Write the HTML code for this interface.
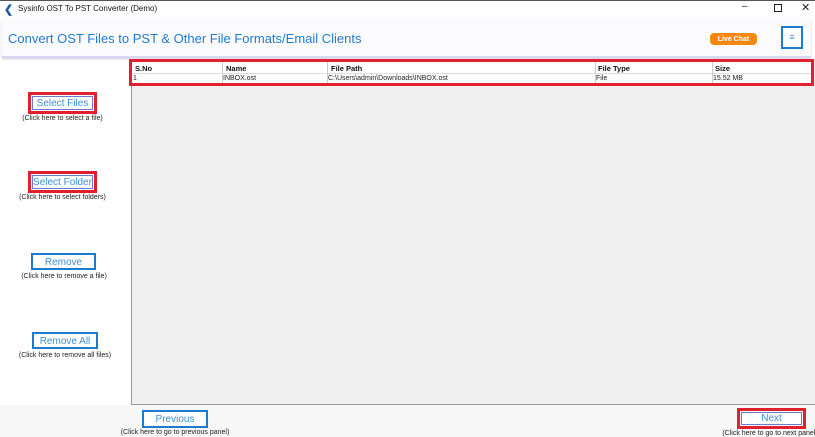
<!DOCTYPE html>
<html><head><style>
*{margin:0;padding:0;box-sizing:border-box}
body{width:815px;height:437px;position:relative;overflow:hidden;background:#fff;font-family:"Liberation Sans",sans-serif}
.a{position:absolute}
.btn{position:absolute;background:#fff;border:2px solid #1a7bd0;color:#3a8fd8;font-size:10px;text-align:center}
.btn.in{border:1px solid #6a7bd0}
.red{position:absolute;border:3px solid #e0202e}
.cap{position:absolute;font-size:7px;color:#222;text-align:center;white-space:nowrap}
.th{position:absolute;top:64px;font-size:7.5px;font-weight:bold;color:#111}
.td{position:absolute;top:75px;font-size:7px;color:#222}
.vl{position:absolute;top:61px;height:22px;width:1px;background:#ccc}
</style></head><body>
<div class="a" style="left:0;top:0;width:815px;height:1px;background:#555"></div>
<div class="a" style="left:4px;top:3px;font-size:11px;color:#1a5c9a;font-weight:bold">&#10094;</div>
<div class="a" style="left:18px;top:4px;font-size:8px;color:#111">Sysinfo OST To PST Converter (Demo)</div>
<div class="a" style="left:742px;top:1px;font-size:10px;color:#222">&#8211;</div>
<div class="a" style="left:774px;top:4px;width:8px;height:8px;border:1px solid #222"></div>
<div class="a" style="left:801px;top:1px;font-size:11px;color:#222">&#10005;</div>
<div class="a" style="left:2px;top:19px;width:809px;height:39px;background:#fbfbfd;border-bottom:2px solid #d8d8f0;box-shadow:0 1px 2px #ccd"></div>
<div class="a" style="left:8px;top:31px;font-size:13px;color:#1f7ad0">Convert OST Files to PST &amp; Other File Formats/Email Clients</div>
<div class="a" style="left:710px;top:33px;width:47px;height:12px;background:#f7880f;border-radius:4px;color:#fff;font-size:7px;font-weight:bold;text-align:center;line-height:13px">Live Chat</div>
<div class="a" style="left:781px;top:26px;width:22px;height:23px;border:2px solid #1a7bd0;background:#fff;color:#4a8fd0;font-size:9px;text-align:center;line-height:19px">&#8801;</div>
<div class="a" style="left:131px;top:59px;width:684px;height:346px;background:#f0f0f0;border-left:1px solid #999;border-bottom:1px solid #999"></div>
<div class="a" style="left:132px;top:61px;width:680px;height:22px;background:#fff"></div>
<div class="a" style="left:132px;top:73px;width:680px;height:1px;background:#ddd"></div>
<div class="vl" style="left:222px"></div><div class="vl" style="left:327px"></div><div class="vl" style="left:595px"></div><div class="vl" style="left:712px"></div>
<div class="th" style="left:135px">S.No</div><div class="th" style="left:226px">Name</div><div class="th" style="left:331px">File Path</div><div class="th" style="left:598px">File Type</div><div class="th" style="left:715px">Size</div>
<div class="td" style="left:133px">1</div><div class="td" style="left:223px">INBOX.ost</div><div class="td" style="left:328px">C:\Users\admin\Downloads\INBOX.ost</div><div class="td" style="left:596px">File</div><div class="td" style="left:713px">15.52 MB</div>
<div class="red" style="left:129px;top:59px;width:685px;height:27px"></div>
<div class="btn in" style="left:32px;top:96px;width:61px;height:14px;line-height:13px">Select Files</div>
<div class="red" style="left:28px;top:92px;width:69px;height:22px"></div>
<div class="cap" style="left:0;width:125px;top:115px">(Click here to select a file)</div>
<div class="btn in" style="left:32px;top:175px;width:61px;height:14px;line-height:13px">Select Folder</div>
<div class="red" style="left:28px;top:171px;width:69px;height:22px"></div>
<div class="cap" style="left:0;width:125px;top:194px">(Click here to select folders)</div>
<div class="btn" style="left:31px;top:253px;width:65px;height:17px;line-height:15px">Remove</div>
<div class="cap" style="left:0;width:128px;top:273px">(Click here to remove a file)</div>
<div class="btn" style="left:32px;top:332px;width:66px;height:17px;line-height:15px">Remove All</div>
<div class="cap" style="left:0;width:130px;top:352px">(Click here to remove all files)</div>
<div class="a" style="left:0;top:405px;width:815px;height:32px;background:#f7f7f7"></div>
<div class="btn" style="left:142px;top:410px;width:66px;height:18px;line-height:16px">Previous</div>
<div class="cap" style="left:115px;width:120px;top:429px">(Click here to go to previous panel)</div>
<div class="btn in" style="left:741px;top:412px;width:61px;height:13px;line-height:12px">Next</div>
<div class="red" style="left:737px;top:408px;width:69px;height:21px"></div>
<div class="cap" style="left:720px;width:100px;top:430px">(Click here to go to next panel)</div>
</body></html>
